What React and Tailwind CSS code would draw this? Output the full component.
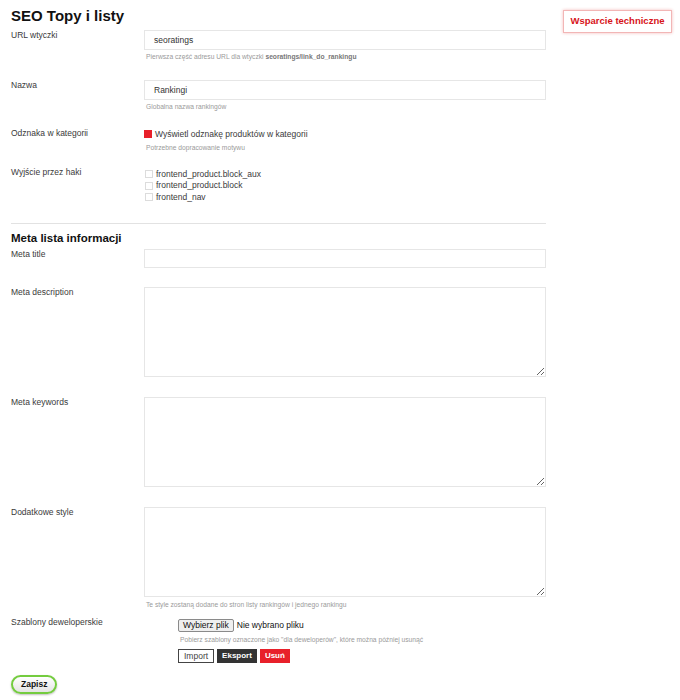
const Hint = ({ children, className = '' }) => (
  <p className={`text-[6.7px] leading-[9px] text-[#9a9a9a] pl-[2px] ${className}`}>{children}</p>
);

const Row = ({ label, children, className = '' }) => (
  <div className={`flex ${className}`}>
    <div className="w-[133px] shrink-0 text-[8.5px] leading-[12px] -mt-[1.5px]">{label}</div>
    <div className="flex-1">{children}</div>
  </div>
);

const TextInput = ({ value = '', h = 'h-[20px]' }) => (
  <input
    defaultValue={value}
    className={`block w-[402px] ${h} border border-[#e6e6e6] bg-white px-[9px] text-[8.5px] text-[#333] outline-none`}
  />
);

const TextArea = () => (
  <textarea className="block w-[402px] h-[90px] border border-[#e6e6e6] bg-white px-[9px] py-[4px] text-[8.5px] outline-none" />
);

const Hook = ({ name }) => (
  <label className="flex items-center">
    <span className="w-[8px] h-[8px] border border-[#dcdcdc] bg-white mr-[3px] ml-px" />
    <span>{name}</span>
  </label>
);

export default function App() {
  return (
    <div className="flex min-h-[700px] bg-white text-[#3a3a3a] font-['Liberation_Sans',Arial,sans-serif]">
      <div className="w-[546px] shrink-0 pl-[11px]">
        <h1 className="pt-[7px] text-[15px] leading-[17px] font-bold text-[#111]">SEO Topy i listy</h1>

        <Row label="URL wtyczki" className="mt-[6px]">
          <TextInput value="seoratings" />
          <Hint className="mt-[2px]">
            Pierwsza część adresu URL dla wtyczki <b className="text-[#777]">seoratings/link_do_rankingu</b>
          </Hint>
        </Row>

        <Row label="Nazwa" className="mt-[19px]">
          <TextInput value="Rankingi" />
          <Hint className="mt-[2px]">Globalna nazwa rankingów</Hint>
        </Row>

        <Row label="Odznaka w kategorii" className="mt-[17px]">
          <div className="flex items-center text-[8.5px] leading-[12px]">
            <span className="w-[8px] h-[8px] bg-[#e8202a] mr-[3px]" />
            <span>Wyświetl odznakę produktów w kategorii</span>
          </div>
          <Hint className="mt-[3px]">Potrzebne dopracowanie motywu</Hint>
        </Row>

        <Row label="Wyjście przez haki" className="mt-[15px]">
          <div className="pt-[1.5px] text-[8.5px] leading-[11.5px]">
            <Hook name="frontend_product.block_aux" />
            <Hook name="frontend_product.block" />
            <Hook name="frontend_nav" />
          </div>
        </Row>

        <hr className="mt-[20px] border-0 border-t border-[#e2e2e2]" />

        <h2 className="mt-[7px] text-[11.5px] leading-[14px] font-bold text-[#111]">Meta lista informacji</h2>

        <Row label="Meta title" className="mt-[4px]">
          <TextInput h="h-[19px]" />
        </Row>

        <Row label="Meta description" className="mt-[19px]">
          <TextArea />
        </Row>

        <Row label="Meta keywords" className="mt-[20px]">
          <TextArea />
        </Row>

        <Row label="Dodatkowe style" className="mt-[20px]">
          <TextArea />
          <Hint className="mt-[3px]">Te style zostaną dodane do stron listy rankingów i jednego rankingu</Hint>
        </Row>

        <Row label="Szablony deweloperskie" className="mt-[8px]">
          <div className="pl-[34px]">
            <div className="flex items-center mt-[2px] text-[8.5px] leading-[11px]">
              <button className="h-[13px] px-[4px] bg-[#efefef] border border-[#8a8a8a] rounded-[2px] text-[#111]">
                Wybierz plik
              </button>
              <span className="ml-[3px] text-[#111]">Nie wybrano pliku</span>
            </div>
            <Hint className="mt-[3px]">
              Pobierz szablony oznaczone jako "dla deweloperów", które można później usunąć
            </Hint>
            <div className="flex gap-[3px] mt-[5px]">
              <button className="h-[14px] px-[5px] bg-white border border-[#444] text-[#444] text-[8.5px] leading-[12px]">Import</button>
              <button className="h-[14px] px-[5px] bg-[#333] text-white text-[8px] font-bold leading-[14px]">Eksport</button>
              <button className="h-[14px] px-[5px] bg-[#e8202a] text-white text-[8px] font-bold leading-[14px]">Usuń</button>
            </div>
          </div>
        </Row>

        <button className="mt-[12px] h-[19px] px-[8px] rounded-full border-2 border-[#74cc3f] bg-gradient-to-b from-white to-[#e4e4e4] shadow-[0_1px_2px_rgba(0,0,0,0.25)] text-[8.5px] font-bold text-[#111] leading-[15px]">
          Zapisz
        </button>
      </div>

      <div className="ml-[17px] pt-[10px]">
        <div className="w-[109px] h-[23px] flex items-center justify-center border border-[#f2b6b6] bg-white shadow-[0_0_3px_rgba(220,30,30,0.3)] text-[9.5px] font-bold text-[#d7141a]">
          Wsparcie techniczne
        </div>
      </div>
    </div>
  );
}
